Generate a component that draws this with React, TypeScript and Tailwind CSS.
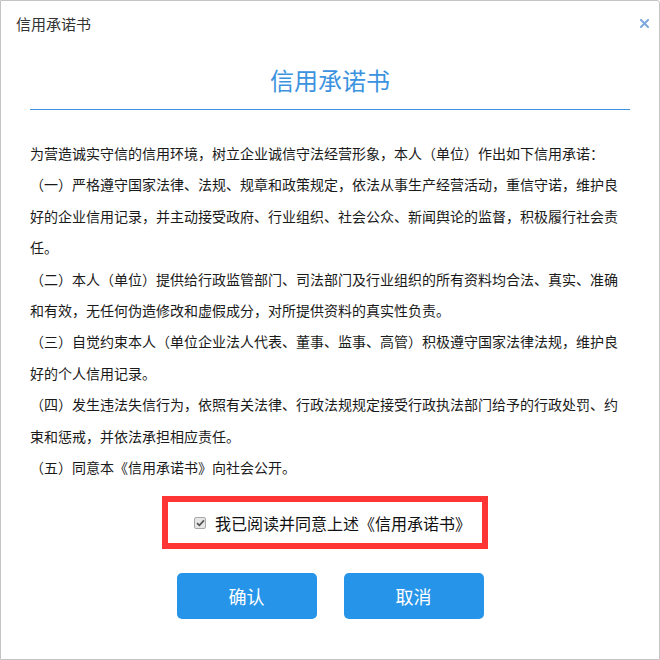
const paragraphs = [
  "为营造诚实守信的信用环境，树立企业诚信守法经营形象，本人（单位）作出如下信用承诺：",
  "（一）严格遵守国家法律、法规、规章和政策规定，依法从事生产经营活动，重信守诺，维护良好的企业信用记录，并主动接受政府、行业组织、社会公众、新闻舆论的监督，积极履行社会责任。",
  "（二）本人（单位）提供给行政监管部门、司法部门及行业组织的所有资料均合法、真实、准确和有效，无任何伪造修改和虚假成分，对所提供资料的真实性负责。",
  "（三）自觉约束本人（单位企业法人代表、董事、监事、高管）积极遵守国家法律法规，维护良好的个人信用记录。",
  "（四）发生违法失信行为，依照有关法律、行政法规规定接受行政执法部门给予的行政处罚、约束和惩戒，并依法承担相应责任。",
  "（五）同意本《信用承诺书》向社会公开。",
];

export default function App() {
  return (
    <div
      className="w-[660px] h-[660px] bg-white border border-[#c4c4c4] rounded-tr-[3px] flex flex-col text-[#222]"
      style={{ fontFamily: '"Noto Sans CJK SC", "Noto Sans", sans-serif' }}
    >
      {/* header */}
      <div className="h-[44px] shrink-0 flex items-center justify-between pl-[15px] pr-[10px]">
        <span className="text-[15px] text-[#333] leading-none">信用承诺书</span>
        <button type="button" aria-label="关闭" className="w-[10px] h-[10px] flex items-center justify-center">
          <svg width="9" height="9" viewBox="0 0 9 9">
            <path d="M1 1 L8 8 M8 1 L1 8" stroke="#7ea8e0" strokeWidth="2" strokeLinecap="square" />
          </svg>
        </button>
      </div>

      {/* body */}
      <div className="px-[29px] flex flex-col">
        <h1 className="text-center text-[24px] leading-[32px] text-[#3b93e0] mt-[19px]">信用承诺书</h1>
        <div className="mt-[13px] border-b border-[#3a92dc]" />

        <div className="mt-[28px] text-[14px] leading-[31.4px] text-[#1a1a1a]">
          {paragraphs.map((p, i) => (
            <p key={i}>{p}</p>
          ))}
        </div>

        <div className="mt-[13px] ml-[132px] w-[326px] h-[53px] border-[6px] border-[#ff3535] flex items-center pl-[26px]">
          <span className="w-[12px] h-[12px] rounded-[2px] border border-[#a8a8a8] bg-[#e6e6e6] flex items-center justify-center">
            <svg width="9" height="8" viewBox="0 0 9 8">
              <path d="M1 4.2 L3.4 6.4 L8 1.4" stroke="#555" strokeWidth="1.7" fill="none" />
            </svg>
          </span>
          <span className="ml-[9px] text-[16px] leading-none text-[#111]">我已阅读并同意上述《信用承诺书》</span>
        </div>

        <div className="mt-[24px] flex justify-center gap-[27px]">
          <button
            type="button"
            className="w-[140px] h-[46px] rounded-[5px] bg-[#2694e8] text-white text-[18px]"
          >
            确认
          </button>
          <button
            type="button"
            className="w-[140px] h-[46px] rounded-[5px] bg-[#2694e8] text-white text-[18px]"
          >
            取消
          </button>
        </div>
      </div>
    </div>
  );
}
